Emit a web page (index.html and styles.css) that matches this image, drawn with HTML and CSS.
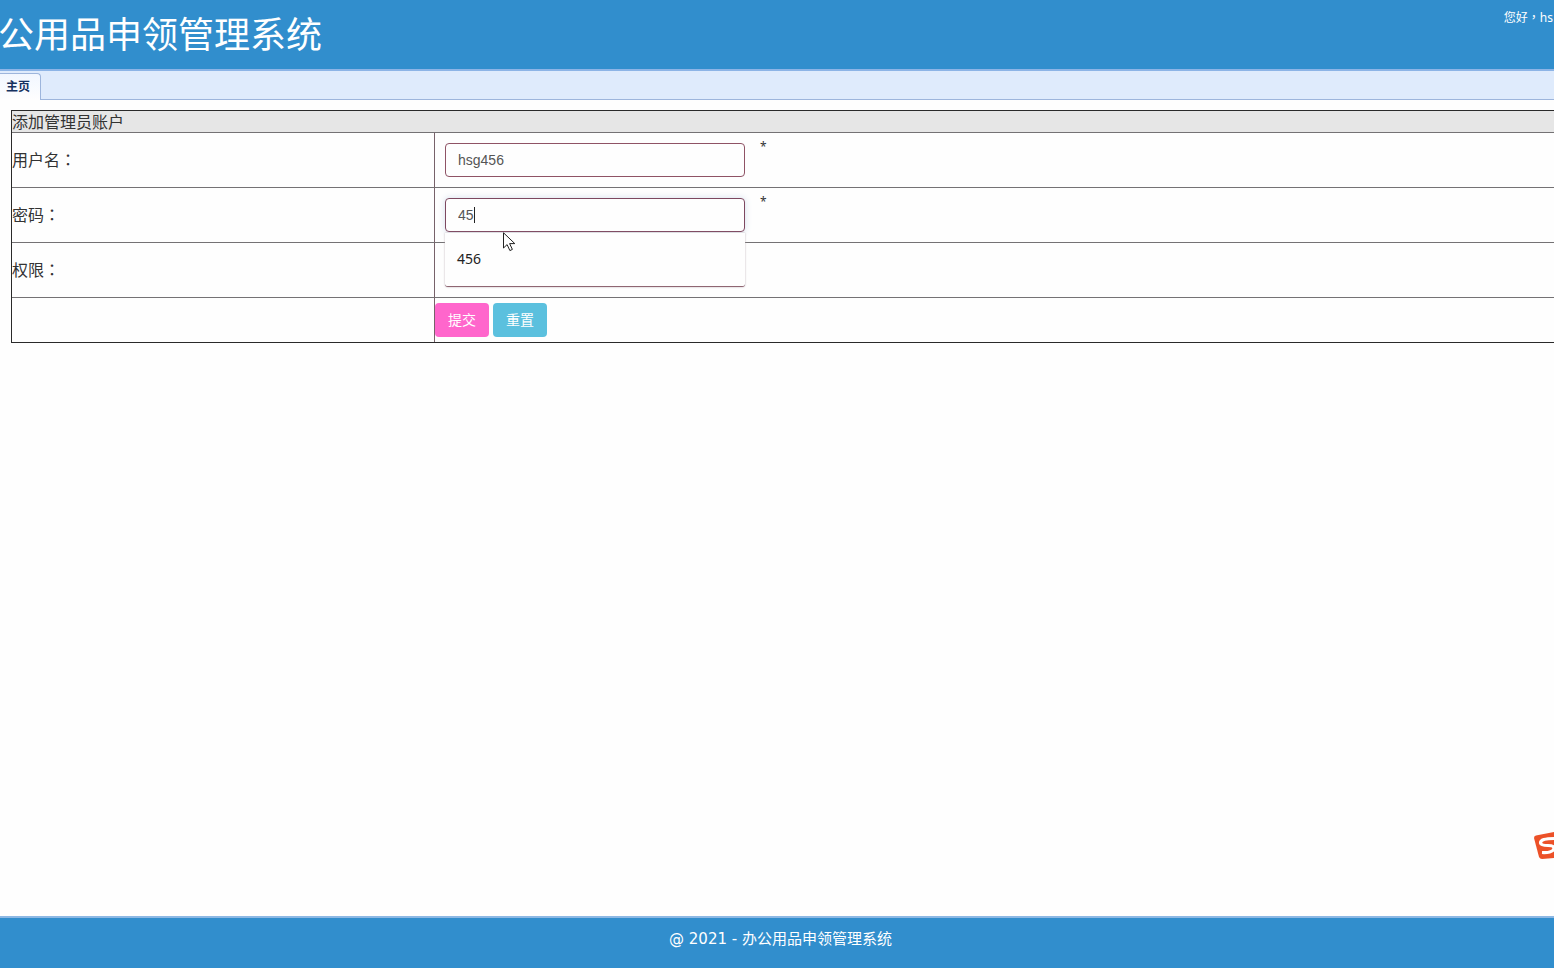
FILE: index.html
```html
<!DOCTYPE html>
<html lang="zh-CN">
<head>
<meta charset="utf-8">
<title>办公用品申领管理系统</title>
<link rel="stylesheet" href="styles.css">
</head>
<body>
<header class="header">
  <h1 class="title">公用品申领管理系统</h1>
  <div class="greeting">您好<span class="punct" lang="zh-TW">&#65292;</span>hs</div>
</header>
<nav class="tabs"><a class="tab" href="#">主页</a></nav>
<main class="content">
  <form>
    <table class="form-table">
      <colgroup><col class="label-col"><col></colgroup>
      <thead>
        <tr><th class="caption" colspan="2">添加管理员账户</th></tr>
      </thead>
      <tbody>
        <tr>
          <td><label for="user">用户名<span class="punct" lang="zh-TW">&#65306;</span></label></td>
          <td><div class="field"><input class="control" id="user" type="text" value="hsg456"><span class="star">*</span></div></td>
        </tr>
        <tr>
          <td><label for="pass">密码<span class="punct" lang="zh-TW">&#65306;</span></label></td>
          <td><div class="field">
            <div class="suggest">
              <input class="control active" id="pass" type="text" value="45" autocomplete="off">
              <span class="caret"></span>
              <div class="popup">456</div>
              <svg class="pointer" viewBox="0 0 13 20" aria-hidden="true"><path d="M.5.8V16l3.6-3.4 2.8 6 2.5-1.2-2.8-5.8h5.2z" fill="#fff" stroke="#222" stroke-width="1"/></svg>
            </div>
            <span class="star">*</span></div></td>
        </tr>
        <tr>
          <td><label for="role">权限<span class="punct" lang="zh-TW">&#65306;</span></label></td>
          <td><div class="field"><select class="control" id="role"><option></option></select></div></td>
        </tr>
        <tr>
          <td></td>
          <td><div class="actions"><button class="btn submit" type="submit">提交</button><button class="btn reset" type="reset">重置</button></div></td>
        </tr>
      </tbody>
    </table>
  </form>
</main>
<footer class="footer">@ 2021 - 办公用品申领管理系统</footer>
<svg class="ime" viewBox="0 0 20 30" aria-hidden="true">
  <path d="M0 8Q0 6 2 5.600L20 2V28L8 29Q6 29 5 27Z" fill="#ec5128"/>
  <path d="M20 8.500Q6.500 8.500 6.500 13Q7 15.500 14 15.500Q20 15.500 20 18.500Q19 23 8 22.500" fill="none" stroke="#fff" stroke-width="3.200"/>
</svg>
</body>
</html>
```
FILE: styles.css
```css
* { box-sizing: border-box; }
body {
  margin: 0;
  min-height: 100vh;
  display: flex;
  flex-direction: column;
  overflow: hidden;
  background: #fefefe;
  color: #333;
  font-family: "Noto Sans", "Noto Sans CJK SC", sans-serif;
  font-size: 16px;
}
.punct { font-family: "Noto Sans CJK TC", sans-serif; }
.header {
  display: flex;
  justify-content: space-between;
  height: 71px;
  background: #318ecd;
  border-bottom: 2px solid #8db4e6;
  color: #fff;
}
.title {
  margin: 6px 0 0 -2px;
  font-size: 36px;
  line-height: 52px;
  font-weight: 400;
  font-family: "Noto Sans CJK SC", sans-serif;
}
.greeting {
  padding: 8px 1px 0 0;
  font-size: 12px;
  line-height: 18px;
  white-space: nowrap;
}
.tabs {
  display: flex;
  align-items: flex-end;
  height: 29px;
  background: #dfebfc;
  border-bottom: 1px solid #9db5dc;
}
.tab {
  height: 27px;
  margin-bottom: -1px;
  padding: 0 10px 0 6px;
  border: 1px solid #9db5dc;
  border-width: 1px 1px 0 0;
  border-radius: 0 4px 0 0;
  background: linear-gradient(#f2f7ff, #fefefe);
  color: #15315f;
  font-size: 12px;
  font-weight: bold;
  line-height: 26px;
  text-decoration: none;
}
.content {
  flex: 1;
  padding: 10px 0 0 11px;
  overflow: hidden;
}
.form-table {
  width: 100%;
  table-layout: fixed;
  border-collapse: separate;
  border-spacing: 0;
  border: 1px solid #2a2a2a;
  border-right: 0;
}
.label-col { width: 422px; }
.form-table th, .form-table td { padding: 0; }
.form-table tbody td { border-top: 1px solid #747274; }
.form-table td + td { border-left: 1px solid #77626a; }
.form-table .caption {
  height: 21px;
  padding-top: 1px;
  background: #e6e6e6;
  font-weight: normal;
  line-height: 20px;
  text-align: left;
}
.form-table label {
  display: block;
  padding-bottom: 2px;
  line-height: 24px;
}
.field {
  display: flex;
  gap: 15px;
  height: 54px;
  padding: 10px;
}
.suggest { position: relative; }
.control {
  display: block;
  width: 300px;
  height: 34px;
  padding: 0 12px;
  border: 1px solid #8f5365;
  border-radius: 4px;
  outline: none;
  background: #fefefe;
  color: #555;
  font-family: "Liberation Sans", Arial, sans-serif;
  font-size: 14px;
}
.active {
  border-color: #7e4860;
  box-shadow: 0 0 7px #d5dfed;
}
.caret {
  position: absolute;
  top: 9px;
  left: 29px;
  width: 1px;
  height: 16px;
  background: #222;
}
.popup {
  position: absolute;
  z-index: 1;
  top: 35px;
  left: 0;
  width: 300px;
  height: 54px;
  padding: 16px 12px;
  border-radius: 0 0 3px 3px;
  border-bottom: 1px solid #8f6672;
  background: #fefefe;
  box-shadow: 0 0 2px #b5a9b0;
  color: #222;
  font-size: 14px;
  line-height: 20px;
}
.pointer {
  position: absolute;
  z-index: 2;
  top: 34px;
  left: 58px;
  width: 13px;
  height: 20px;
}
.star { font-size: 12px; line-height: 8px; }
.actions {
  display: flex;
  gap: 4px;
  padding: 5px 0;
}
.btn {
  width: 54px;
  height: 34px;
  padding: 0 0 2px;
  border: 0;
  border-radius: 4px;
  color: #fff;
  font-family: "Noto Sans CJK SC", sans-serif;
  font-size: 14px;
}
.submit { background: #ff66cc; }
.reset { background: #5bc0de; }
.footer {
  height: 52px;
  padding: 10px 0 0 7px;
  border-top: 2px solid #8db8e4;
  background: #318ecd;
  color: #fff;
  font-family: "DejaVu Sans", "Noto Sans CJK SC", sans-serif;
  font-size: 15px;
  line-height: 22px;
  text-align: center;
}
.ime {
  position: fixed;
  right: 0;
  bottom: 108px;
  width: 20px;
  height: 30px;
}
```
